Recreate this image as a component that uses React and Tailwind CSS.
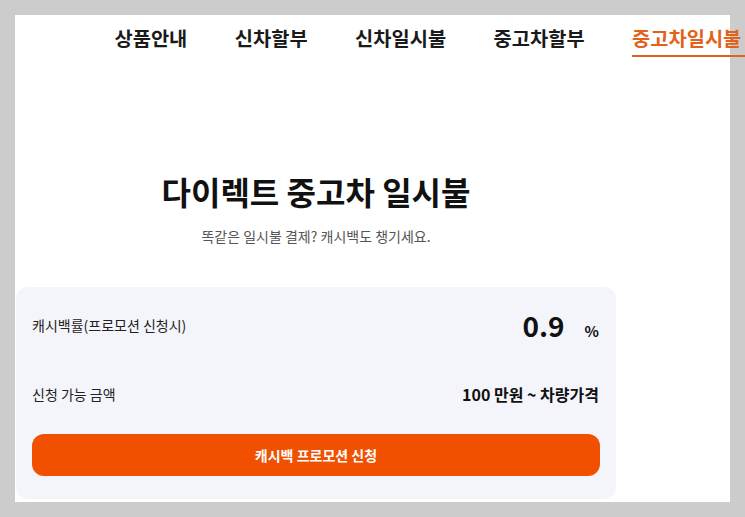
const NAV = ["상품안내", "신차할부", "신차일시불", "중고차할부", "중고차일시불"];

export default function App() {
  const active = "중고차일시불";

  return (
    <div
      className="w-[745px] h-[517px] overflow-hidden bg-[#cccccc] pt-[15px] pl-[15px]"
      style={{ fontFamily: '"Noto Sans CJK KR", "Noto Sans", sans-serif' }}
    >
      <div className="w-[715px] h-[487px] bg-white">
        {/* top menu */}
        <nav className="flex gap-[47.5px] pl-[99.5px] pt-[9px] whitespace-nowrap">
          {NAV.map((item) => (
            <div
              key={item}
              className={
                item === active
                  ? "text-[19.8px] leading-[27px] font-bold text-[#e2621c] pb-1 pr-2 border-b-2 border-[#e2621c]"
                  : "text-[19.8px] leading-[27px] font-bold text-[#1a1a1a] pb-1 border-b-2 border-transparent"
              }
            >
              {item}
            </div>
          ))}
        </nav>

        <div className="w-[600px] ml-px">
          <div className="flex flex-col items-center pt-[114px]">
            <h1 className="text-[32px] leading-[40px] font-bold text-[#111]">다이렉트 중고차 일시불</h1>
            <p className="mt-[15px] text-[14px] leading-[20px] text-[#555]">똑같은 일시불 결제? 캐시백도 챙기세요.</p>
          </div>

          {/* cashback card */}
          <section className="mt-[41px] bg-[#f4f5fa] rounded-[12px] px-4 pt-[20px] pb-[23px]">
            <div className="flex items-center justify-between h-[36px]">
              <span className="text-[14px] text-[#222]">캐시백률(프로모션 신청시)</span>
              <div className="flex items-baseline pr-px">
                <span className="text-[28px] font-bold text-[#111] leading-[36px]">0.9</span>
                <span className="ml-[20px] text-[15px] font-bold text-[#111]">%</span>
              </div>
            </div>
            <div className="flex items-center justify-between h-[22px] mt-[40px]">
              <span className="text-[14px] text-[#222]">신청 가능 금액</span>
              <span className="text-[16px] font-bold text-[#111] pr-px">100 만원 ~ 차량가격</span>
            </div>
            <button className="mt-[29px] w-full h-[42px] rounded-[12px] bg-[#f05000] text-white text-[14px] font-bold">
              캐시백 프로모션 신청
            </button>
          </section>
        </div>
      </div>
    </div>
  );
}
